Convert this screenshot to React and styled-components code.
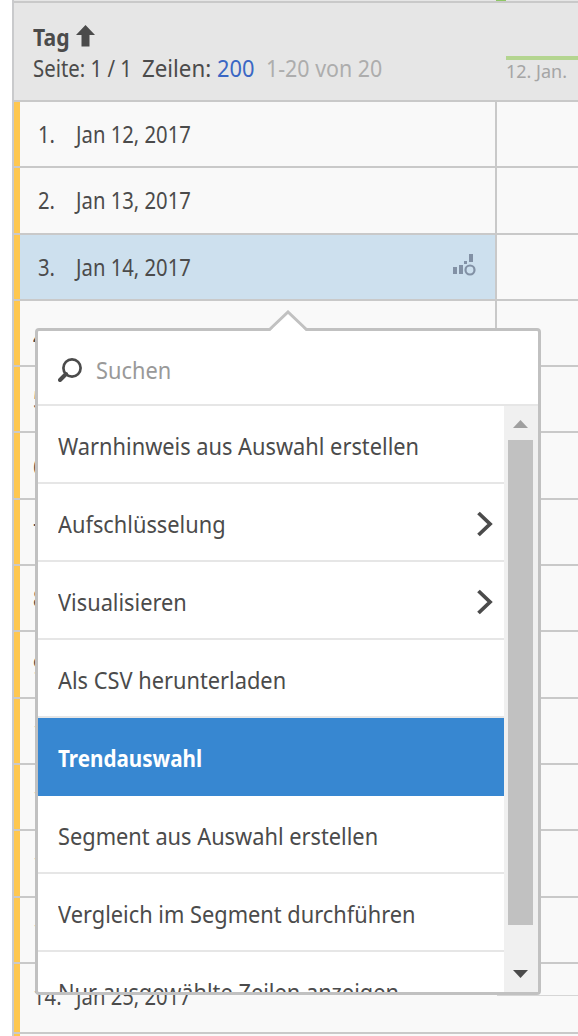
import React from 'react';
import styled, { createGlobalStyle } from 'styled-components';

const Global = createGlobalStyle`
  * { box-sizing: border-box; }
  body { margin: 0; background: #fff; overflow: hidden; font-family: "Noto Sans", "Open Sans", sans-serif; color: #4b4b4b; }
`;
const Page = styled.main`
  position: relative; width: 578px; height: 1036px; overflow: hidden; padding-left: 12px;
`;
const Table = styled.section`
  border-left: 2px solid #c9cacc; height: 1036px; overflow: hidden; background: #f9f9f9;
`;
const TopStrip = styled.div`
  height: 3px; background: #e6e6e6; border-bottom: 2px solid #c9c9c9; padding-left: 482px;
`;
const GreenTick = styled.div`width: 10px; height: 1px; background: #8fc765;`;
const Header = styled.header`
  display: flex; height: 99px; background: #e6e6e6; border-bottom: 2px solid #c9c9c9;
`;
const HeaderMain = styled.div`width: 482px; padding: 18px 0 0 19px;`;
const HeaderLine = styled.div`display: flex; align-items: center; height: 31px; white-space: nowrap;`;
const SortArrow = styled.svg`display: block; margin-bottom: 2px;`;
const Text = styled.span`
  display: inline-block; white-space: nowrap; flex: none;
  width: ${p => p.$w}px; font-size: ${p => p.$size || 23}px; line-height: ${p => p.$lh || 30}px;
  font-weight: ${p => p.$weight || 400}; color: ${p => p.$color || 'inherit'};
  transform: scaleX(${p => p.$sx || 0.948}); transform-origin: left center;
  margin-left: ${p => p.$ml || 0}px;
`;
const Trend = styled.div`padding: 53px 0 0 10px; flex: 1;`;
const TrendLine = styled.div`height: 4px; background: #b4d590;`;
const Row = styled.div`
  display: flex; height: ${p => p.$h || 66.3}px; border-bottom: 2px solid #c9c9c9;
`;
const Cell = styled.div`
  display: flex; align-items: center; width: 483px; border-left: 6px solid #fec74f;
  border-right: ${p => (p.$open ? '0' : '2px solid #c9c9c9')};
  background: ${p => (p.$selected ? '#cde0ee' : '#f9f9f9')};
  padding: ${p => p.$top || 0}px 19px ${p => p.$bottom || 0}px ${p => p.$pad}px;
`;
const ValueCell = styled.div`flex: 1; height: 32px; border-bottom: 1px solid #d6d6d6;`;
const CellIcon = styled.span`margin-left: auto; display: flex; padding-bottom: 4px;`;
const Menu = styled.div`
  position: absolute; left: 35px; top: 328px; width: 506px; height: 667px;
  border: 3px solid #c1c1c1; border-radius: 4px; background: #fff;
`;
const Beak = styled.svg`position: absolute; left: 230px; top: -21px; display: block;`;
const Search = styled.div`
  display: flex; align-items: center; height: 75px; padding: 4px 0 0 20px; border-bottom: 2px solid #e6e6e6;
`;
const Body = styled.div`display: flex; height: 586px; overflow: hidden;`;
const List = styled.div`width: 466px; height: 586px; overflow: hidden;`;
const Item = styled.div`
  display: flex; align-items: center; justify-content: space-between; height: 78px; padding: 4px 11px 0 20px;
  border-bottom: 2px solid #e6e6e6;
  ${p => p.$active && 'background: #3787d1; color: #fff; border-bottom-color: #3787d1;'}
`;
const Scroll = styled.div`
  display: flex; flex-direction: column; align-items: flex-start; width: 34px; background: #f0f0f0; height: 586px;
`;
const Arrow = styled.svg`display: block; flex: none;`;
const Thumb = styled.div`width: 25px; height: 485px; margin-left: 4px; flex: none; background: #c1c1c1;`;

const rows = [
  { n: '1.', d: 'Jan 12, 2017' },
  { n: '2.', d: 'Jan 13, 2017' },
  { n: '3.', d: 'Jan 14, 2017', selected: true },
  { n: '4.', pad: 13, top: 8 },
  { n: '5.', pad: 13 },
  { n: '6.', pad: 13 },
  { n: '7.', pad: 13 },
  { n: '8.', pad: 13 },
  { n: '9.', pad: 13 },
  { n: '10.', pad: 13 },
  { n: '11.', pad: 13 },
  { n: '12.', pad: 13 },
  { n: '13.', pad: 13 },
  { n: '14.', d: 'Jan 25, 2017', pad: 13, h: 70, bottom: 3, open: true },
  { n: '', open: true },
];
const items = [
  { t: 'Warnhinweis aus Auswahl erstellen' },
  { t: 'Aufschlüsselung', sub: true },
  { t: 'Visualisieren', sub: true },
  { t: 'Als CSV herunterladen' },
  { t: 'Trendauswahl', active: true },
  { t: 'Segment aus Auswahl erstellen' },
  { t: 'Vergleich im Segment durchführen' },
  { t: 'Nur ausgewählte Zeilen anzeigen' },
];

export default function App() {
  return (
    <Page>
      <Global />
      <Table>
        <TopStrip><GreenTick /></TopStrip>
        <Header>
          <HeaderMain>
            <HeaderLine>
              <Text $w={43} $weight={700} $sx={0.92}>Tag</Text>
              <SortArrow width="19" height="22" viewBox="0 0 19 22"><path d="M9.5 0L19 10H13.5V21.5H5.5V10H0Z" fill="#4b4b4b" /></SortArrow>
            </HeaderLine>
            <HeaderLine>
              <Text $w={109} $sx={0.885}>Seite: 1 / 1</Text>
              <Text $w={75} $sx={0.97}>Zeilen:</Text>
              <Text $w={49} $color="#3a67c4">200</Text>
              <Text $w={120} $sx={0.93} $color="#adadad">1-20 von 20</Text>
            </HeaderLine>
          </HeaderMain>
          <Trend>
            <TrendLine />
            <Text $w={66} $size={18} $lh={22} $sx={1} $color="#a5a5a5">12. Jan.</Text>
          </Trend>
        </Header>
        {rows.map((r, i) => (
          <Row key={i} $h={r.h}>
            <Cell $selected={r.selected} $pad={r.pad || 18} $top={r.top} $bottom={r.bottom} $open={r.open}>
              <Text $w={r.pad ? 43 : 38} $sx={0.88}>{r.n}</Text>
              {r.d && <Text $w={115} $sx={0.88}>{r.d}</Text>}
              {r.selected && (
                <CellIcon>
                  <svg width="23" height="23" viewBox="0 0 23 23" fill="#8291a5">
                    <path d="M0 14h4v7H0zM6 12h4v9H6zM11 8h3v3h-3zM16 1h4v8h-4z" />
                    <circle cx="17" cy="17" r="4.5" fill="none" stroke="#8291a5" strokeWidth="2.2" />
                  </svg>
                </CellIcon>
              )}
            </Cell>
            {r.n === '14.' && <ValueCell />}
          </Row>
        ))}
      </Table>
      <Menu>
        <Beak width="40" height="22" viewBox="0 0 40 22">
          <path d="M1 22L20 2L39 22Z" fill="#fff" />
          <path d="M1 20L20 2L39 20" fill="none" stroke="#c1c1c1" strokeWidth="3" />
        </Beak>
        <Search>
          <svg width="24" height="24" viewBox="0 0 24 24" fill="none" stroke="#4b4b4b">
            <circle cx="14" cy="10" r="8.6" strokeWidth="2.7" />
            <path d="M8 16L2 22" strokeWidth="4" strokeLinecap="round" />
          </svg>
          <Text $w={90} $ml={14} $color="#999">Suchen</Text>
        </Search>
        <Body>
          <List>
            {items.map(i => (
              <Item key={i.t} $active={i.active}>
                <Text $w={360} $weight={i.active ? 700 : 400} $sx={i.active ? 0.897 : 0.948}>{i.t}</Text>
                {i.sub && (
                  <svg width="16" height="26" viewBox="0 0 16 26" fill="none" stroke="#4b4b4b" strokeWidth="3.8">
                    <path d="M1.5 2L13 13L1.5 24" />
                  </svg>
                )}
              </Item>
            ))}
          </List>
          <Scroll>
            <Arrow width="34" height="34"><path d="M9 22L16.5 14L24 22Z" fill="#9f9f9f" /></Arrow>
            <Thumb />
            <Arrow width="34" height="65"><path d="M9 45H24L16.5 53Z" fill="#4b4b4b" /></Arrow>
          </Scroll>
        </Body>
      </Menu>
    </Page>
  );
}
